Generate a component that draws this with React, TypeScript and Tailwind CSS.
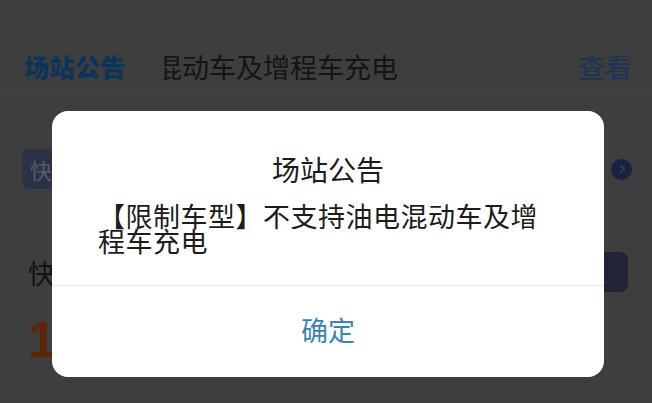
import React from 'react'

const cjk = { fontFamily: '"Noto Sans CJK SC", "Noto Sans", sans-serif' }

export default function App() {
  return (
    <div className="relative w-[652px] h-[403px] overflow-hidden bg-[#3e3e3e]" style={cjk}>
      {/* page behind the dialog */}
      <div className="flex flex-col">
        <div className="mt-[40px] h-[54px] flex items-center pl-[24px] pr-[20px] border-b border-[#434343]">
          <div className="text-[25px] font-black text-[#0b345a] tracking-[0.5px] leading-none">场站公告</div>
          <div className="ml-[38px] flex-1 overflow-hidden">
            <div className="ml-[-9px] whitespace-nowrap text-[27px] leading-none text-[#141414]">混动车及增程车充电</div>
          </div>
          <div className="text-[27px] leading-none text-[#1a3358]">查看</div>
        </div>

        <div className="mt-[55px] h-[40px] flex items-center justify-between pl-[22px] pr-[20px]">
          <div className="h-[40px] px-[8px] rounded-[7px] bg-[#2b3147] flex items-center text-[22px] text-[#565b6c]">快捷充电</div>
          <div className="w-[21px] h-[21px] rounded-full bg-[#18243e] flex items-center justify-center">
            <svg width="10" height="10" viewBox="0 0 10 10" fill="none">
              <path d="M3.5 1.5 L7 5 L3.5 8.5" stroke="#33425f" strokeWidth="1.5" strokeLinecap="round" strokeLinejoin="round" />
            </svg>
          </div>
        </div>

        <div className="mt-[22px] border-t border-[#424242]" />

        <div className="mt-[40px] h-[40px] flex items-center justify-between pl-[28px] pr-[24px]">
          <div className="text-[27px] leading-none text-[#121212]">快充桩</div>
          <div className="w-[56px] h-[40px] rounded-[8px] bg-[#212437]" />
        </div>

        <div className="mt-[25px] h-[46px] flex items-center pl-[28px]">
          <div className="text-[50px] font-bold leading-none text-[#5e2507]" style={{ fontFamily: '"Liberation Sans", sans-serif' }}>12</div>
        </div>

        <div className="mt-[50px] mx-[22px] h-[40px] rounded-t-[8px] bg-[#33353e]" />
      </div>

      {/* dialog */}
      <div className="absolute left-[52px] top-[111px] w-[552px] h-[266px] bg-white rounded-[16px] flex flex-col">
        <div className="pt-[42px] text-center text-[28px] leading-[32px] text-[#1c1c1c]">场站公告</div>
        <div className="mt-[18px] pl-[46px] pr-[60px] text-[27px] leading-[25px] tracking-[0.5px] text-[#1c1c1c]">
          【限制车型】不支持油电混动车及增程车充电
        </div>
        <div className="mt-auto h-[92px] pb-[4px] border-t border-[#e8e8e8] flex items-center justify-center">
          <span className="text-[27px] leading-none text-[#3a86b0]">确定</span>
        </div>
      </div>
    </div>
  )
}
